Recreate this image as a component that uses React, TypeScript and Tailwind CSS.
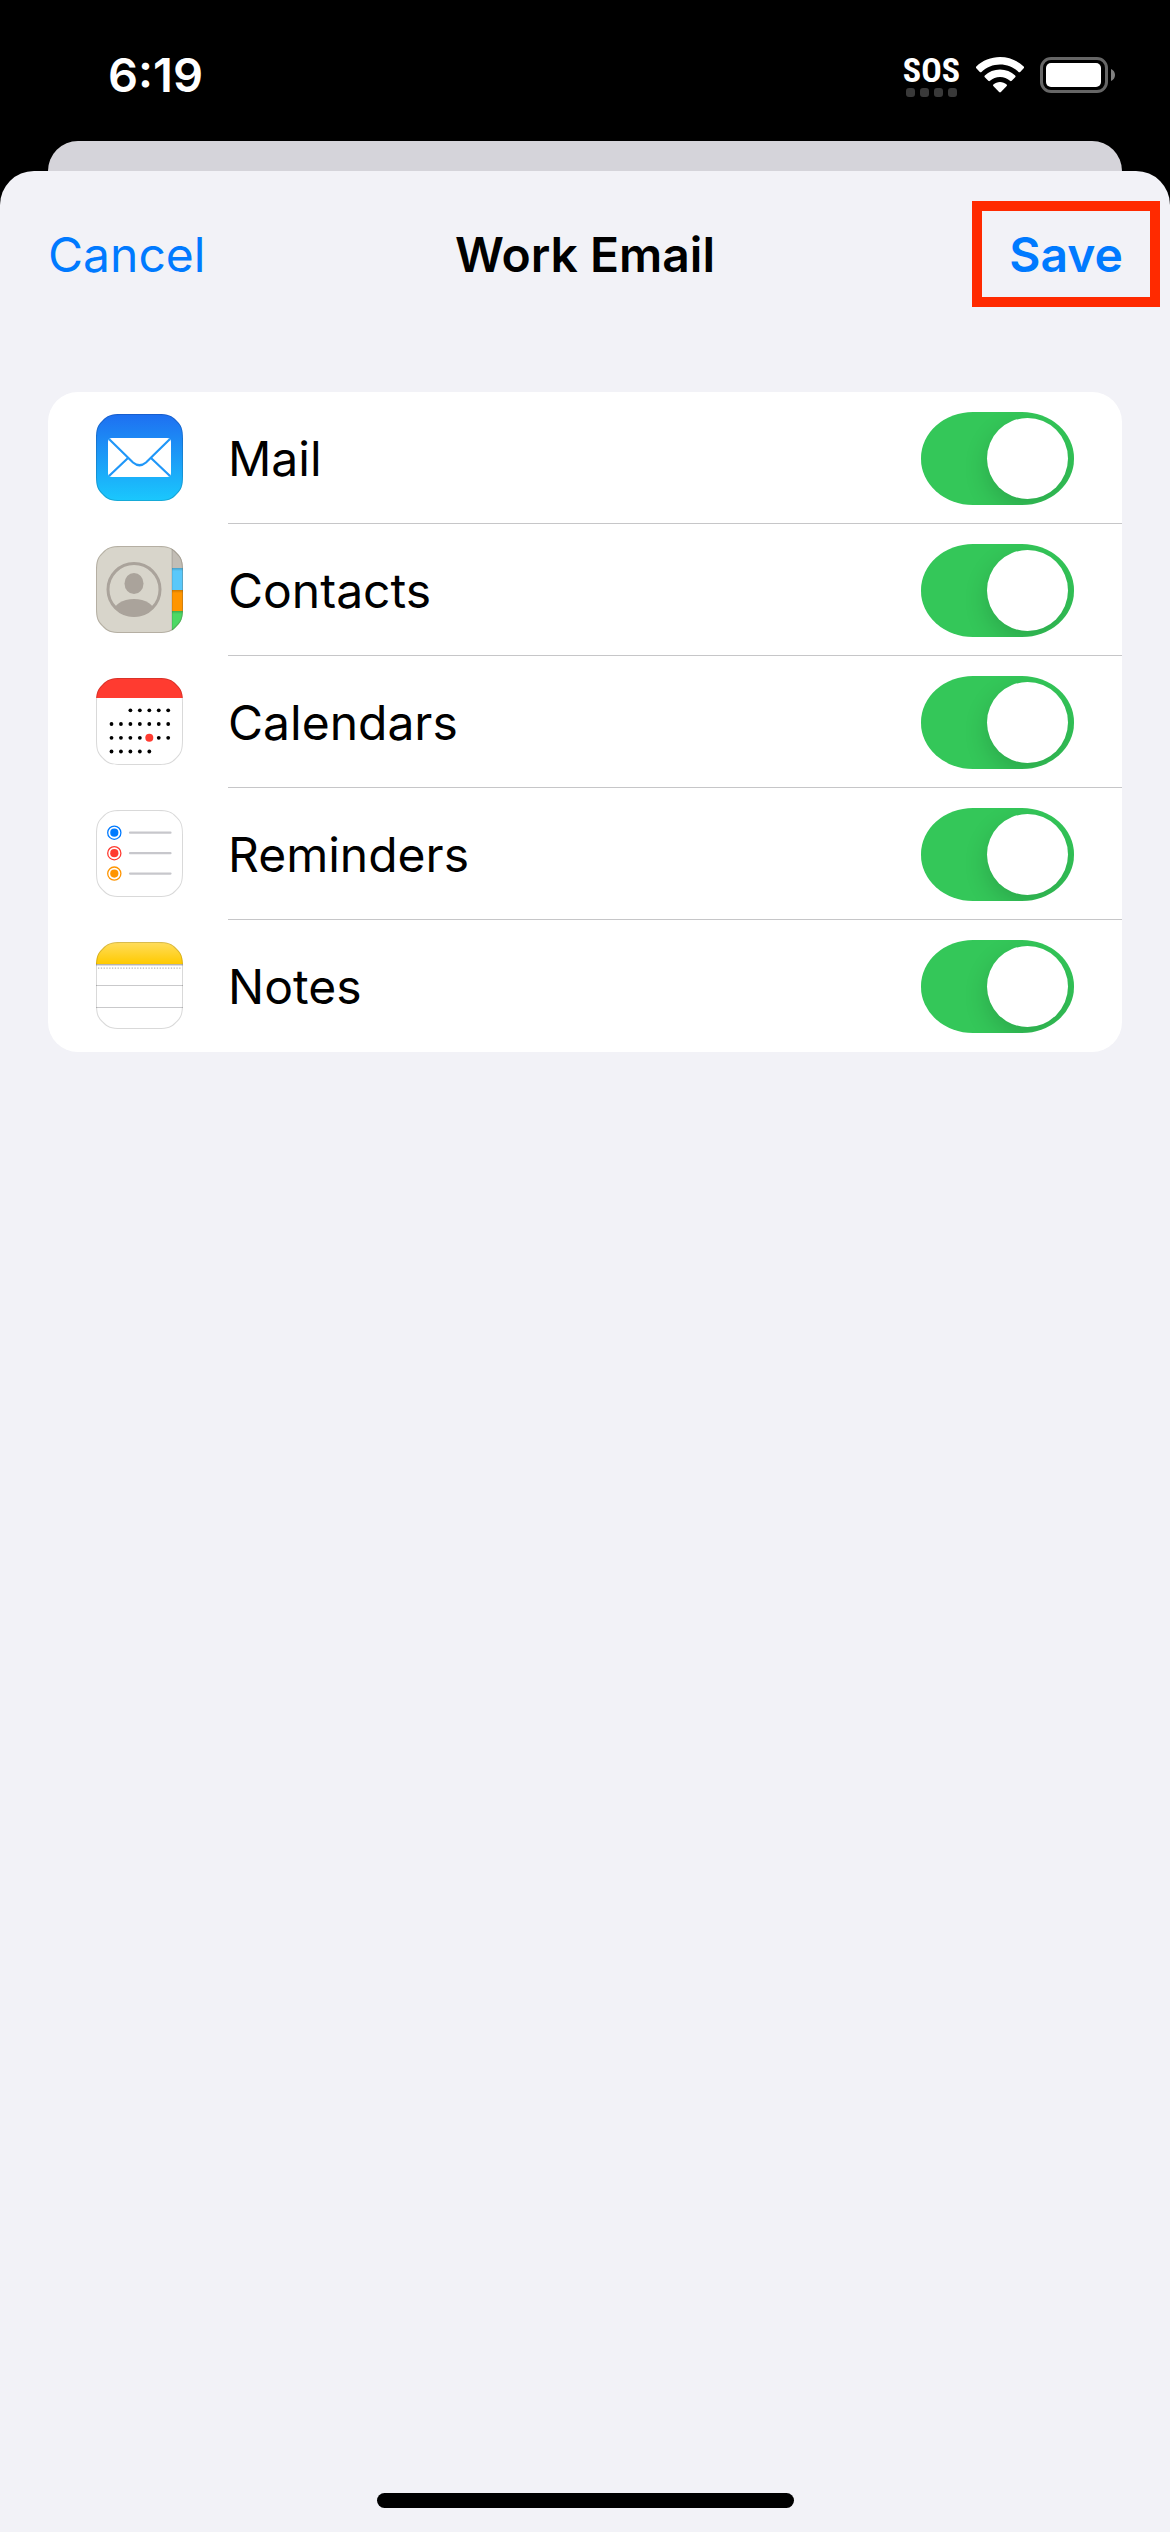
import React, { useState } from 'react';

interface Account {
  id: string;
  label: string;
  icon: React.ReactNode;
}

const TILE =
  'M25 0H62C72 0 76 1.500 80.500 6.500C85.500 11 87 15 87 25V62C87 72 85.500 76 80.500 80.500C76 85.500 72 87 62 87H25C15 87 11 85.500 6.500 80.500C1.500 76 0 72 0 62V25C0 15 1.500 11 6.500 6.500C11 1.500 15 0 25 0Z';

// Rounded tile shared by every app icon
const IconTile: React.FC<{ id: string; edge: string; children: React.ReactNode }> = ({ id, edge, children }) => (
  <svg viewBox="0 0 87 87" className="w-[87px] h-[87px] mb-px shrink-0" aria-hidden="true">
    <defs>
      <clipPath id={`${id}-clip`}>
        <path d={TILE} />
      </clipPath>
    </defs>
    <g clipPath={`url(#${id}-clip)`}>
      {children}
      <path d={TILE} fill="none" stroke={edge} strokeWidth="2" />
    </g>
  </svg>
);

const MailIcon = () => (
  <IconTile id="mail" edge="rgba(0,0,0,0.15)">
    <defs>
      <linearGradient id="mail-bg" x1="0" y1="0" x2="0" y2="1">
        <stop offset="0" stopColor="#1e6ff1" />
        <stop offset="1" stopColor="#1ac8fd" />
      </linearGradient>
    </defs>
    <rect width="87" height="87" fill="url(#mail-bg)" />
    <rect x="12" y="24" width="63" height="39" rx="4" fill="#fff" />
    <g fill="none" stroke="#2097f8" strokeWidth="2.200">
      <path d="M13 25L37 48.500Q43.500 54 50 48.500L74 25" />
      <path d="M13 62L32 44M74 62L55 44" />
    </g>
  </IconTile>
);

const ContactsIcon = () => (
  <IconTile id="contacts" edge="rgba(90,80,60,0.28)">
    <defs>
      <clipPath id="contacts-face">
        <circle cx="38" cy="43.500" r="27" />
      </clipPath>
      <linearGradient id="contacts-shade" x1="0" y1="0" x2="0" y2="1">
        <stop offset="0" stopColor="#000" stopOpacity="0.2" />
        <stop offset="1" stopColor="#000" stopOpacity="0" />
      </linearGradient>
    </defs>
    <rect width="87" height="87" fill="#d8d5cb" />
    <rect x="76" width="11" height="22" fill="#c2bdb5" />
    <rect x="76" y="22" width="11" height="22" fill="#5ac8fa" />
    <rect x="76" y="44" width="11" height="21" fill="#ff9500" />
    <rect x="76" y="65" width="11" height="22" fill="#4cd964" />
    <rect x="76" y="22" width="11" height="3" fill="url(#contacts-shade)" />
    <rect x="76" y="44" width="11" height="3" fill="url(#contacts-shade)" />
    <rect x="76" y="65" width="11" height="3" fill="url(#contacts-shade)" />
    <rect x="75.500" width="1" height="87" fill="#000" opacity="0.15" />
    <circle cx="38" cy="43.500" r="26" fill="none" stroke="#aaa39b" strokeWidth="3" />
    <ellipse cx="38" cy="37.500" rx="9.500" ry="10.500" fill="#aaa39b" />
    <ellipse cx="38" cy="67" rx="21" ry="14" fill="#aaa39b" clipPath="url(#contacts-face)" />
  </IconTile>
);

const CALENDAR_ROWS = [
  { y: 32.3, from: 2, to: 6 },
  { y: 46, from: 0, to: 6 },
  { y: 59.8, from: 0, to: 6 },
  { y: 73.5, from: 0, to: 4 },
];

const CalendarIcon = () => (
  <IconTile id="calendar" edge="rgba(0,0,0,0.15)">
    <rect width="87" height="87" fill="#fff" />
    <rect width="87" height="20" fill="#ff3b30" />
    {CALENDAR_ROWS.map((row, r) =>
      [0, 1, 2, 3, 4, 5, 6]
        .filter((col) => col >= row.from && col <= row.to)
        .map((col) => {
          const today = r === 2 && col === 4;
          return (
            <circle
              key={`${r}-${col}`}
              cx={15.5 + col * 9.45}
              cy={row.y}
              r={today ? 4 : 1.9}
              fill={today ? '#ff3b30' : '#000'}
            />
          );
        })
    )}
  </IconTile>
);

const RemindersIcon = () => (
  <IconTile id="reminders" edge="rgba(0,0,0,0.15)">
    <rect width="87" height="87" fill="#fff" />
    {[
      { y: 22.7, color: '#007aff' },
      { y: 43.2, color: '#ff3b30' },
      { y: 63.6, color: '#ff9500' },
    ].map(({ y, color }) => (
      <g key={color}>
        <circle cx="18.300" cy={y} r="6.600" fill="none" stroke={color} strokeWidth="1.300" />
        <circle cx="18.300" cy={y} r="4.100" fill={color} />
        <path d={`M34 ${y}H74.500`} stroke="#c7c7cc" strokeWidth="2.200" strokeLinecap="round" />
      </g>
    ))}
  </IconTile>
);

const NotesIcon = () => (
  <IconTile id="notes" edge="rgba(0,0,0,0.15)">
    <defs>
      <linearGradient id="notes-bar" x1="0" y1="0" x2="0" y2="1">
        <stop offset="0" stopColor="#ffdd5e" />
        <stop offset="1" stopColor="#ffca00" />
      </linearGradient>
    </defs>
    <rect width="87" height="87" fill="#fff" />
    <rect width="87" height="22" fill="url(#notes-bar)" />
    <rect y="22" width="87" height="1" fill="#b5b3ad" />
    <rect y="23" width="87" height="1" fill="#dcdce0" />
    <path d="M2 26.200H86" stroke="#b8b8b8" strokeWidth="1.200" strokeDasharray="1.300 1.500" />
    <path d="M0 43.500H87M0 65.500H87" stroke="#c9c9cb" />
  </IconTile>
);

const accounts: Account[] = [
  { id: 'mail', label: 'Mail', icon: <MailIcon /> },
  { id: 'contacts', label: 'Contacts', icon: <ContactsIcon /> },
  { id: 'calendars', label: 'Calendars', icon: <CalendarIcon /> },
  { id: 'reminders', label: 'Reminders', icon: <RemindersIcon /> },
  { id: 'notes', label: 'Notes', icon: <NotesIcon /> },
];

const StatusBar = () => (
  <div className="h-[141px] pt-2 pl-[108px] pr-[55px] flex items-center justify-between text-white">
    <span className="text-[47px] leading-[56px] font-semibold">6:19</span>
    <div className="flex items-center gap-4">
      <div className="flex flex-col items-center gap-1 pt-1">
        <span className="text-[34px] leading-[28px] font-bold font-['Roboto_Condensed','Open_Sans_Condensed','Liberation_Sans_Narrow','Roboto',sans-serif]">SOS</span>
        <div className="flex gap-[5px]">
          {[0, 1, 2, 3].map((dot) => (
            <span key={dot} className="w-[9px] h-[9px] rounded-[3px] bg-[#393939]" />
          ))}
        </div>
      </div>
      <svg viewBox="0 0 48 36" className="w-12 h-9" fill="#fff" aria-label="Wi-Fi">
        <path d="M24 0C33 0 41.500 3.500 47.700 9.500Q48.500 10.400 47.700 11.300L44.200 14.900Q43.400 15.700 42.500 14.900C37.500 10.200 31 7.500 24 7.500S10.500 10.200 5.500 14.900Q4.600 15.700 3.800 14.900L0.300 11.300Q-0.500 10.400 0.300 9.500C6.500 3.500 15 0 24 0Z" />
        <path d="M24 12.500C29.800 12.500 35.200 14.700 39.200 18.400Q40.100 19.300 39.200 20.200L35.700 23.800Q34.900 24.600 34 23.800C31.300 21.400 27.800 20 24 20S16.700 21.400 14 23.800Q13.100 24.600 12.300 23.800L8.800 20.200Q7.900 19.300 8.800 18.400C12.800 14.700 18.200 12.500 24 12.500Z" />
        <path d="M24 25C26.500 25 28.800 25.900 30.600 27.400Q31.500 28.200 30.700 29.100L24.900 35.100Q24 36 23.100 35.100L17.300 29.100Q16.500 28.200 17.400 27.400C19.200 25.900 21.500 25 24 25Z" />
      </svg>
      <svg viewBox="0 0 75 36" className="w-[75px] h-9" aria-label="Battery">
        <rect x="1.500" y="1.500" width="65" height="33" rx="9.500" fill="none" stroke="#666" strokeWidth="3" />
        <rect x="6" y="6" width="55" height="24" rx="5" fill="#fff" />
        <path d="M71 12C73.400 13 75 15.300 75 18S73.400 23 71 24Z" fill="#808080" />
      </svg>
    </div>
  </div>
);

const App: React.FC = () => {
  const [enabled, setEnabled] = useState<Record<string, boolean>>({
    mail: true,
    contacts: true,
    calendars: true,
    reminders: true,
    notes: true,
  });

  const toggle = (id: string) => setEnabled((prev) => ({ ...prev, [id]: !prev[id] }));

  return (
    <div className="min-h-screen flex flex-col bg-black text-black text-[48px] leading-[60px] font-['Inter',sans-serif]">
      <StatusBar />

      {/* Edge of the screen behind the sheet */}
      <div className="h-[30px] mx-12 rounded-t-[30px] bg-[#d5d4da]" />

      <div className="flex-1 flex flex-col rounded-t-[34px] bg-[#f2f2f7]">
        <header className="grid grid-cols-[1fr_auto_1fr] items-center pt-[30px] px-2.5">
          <button className="justify-self-start pt-0.5 pl-[38px] text-[#007aff]">Cancel</button>
          <h1 className="pt-0.5 font-semibold">Work Email</h1>
          <button className="justify-self-end h-[106px] pt-0.5 px-[27px] border-[10px] border-[#ff2a00] text-[#007aff] font-semibold">
            Save
          </button>
        </header>

        <main className="flex-1 px-12 pt-[85px]">
          <ul className="rounded-[30px] bg-white">
            {accounts.map((account, idx) => (
              <li key={account.id} className="flex items-center h-[132px] pl-12">
                {account.icon}
                <label
                  htmlFor={account.id}
                  className={`flex-1 h-full ml-[45px] pt-0.5 flex items-center border-b ${
                    idx < accounts.length - 1 ? 'border-[#c6c6c8]' : 'border-transparent'
                  }`}
                >
                  <span className="flex-1">{account.label}</span>
                  <input
                    id={account.id}
                    type="checkbox"
                    role="switch"
                    checked={enabled[account.id]}
                    onChange={() => toggle(account.id)}
                    className="appearance-none mr-12 w-[153px] h-[93px] p-1.5 flex items-center overflow-hidden rounded-[52px/46px] bg-[#e9e9ea] checked:bg-[#34c759] checked:justify-end before:content-[''] before:w-[81px] before:h-[81px] before:rounded-full before:bg-white before:shadow-[0_9px_24px_rgba(0,0,0,0.16)]"
                  />
                </label>
              </li>
            ))}
          </ul>
        </main>

        <div className="w-[417px] h-[15px] mb-6 mx-auto rounded-full bg-black" />
      </div>
    </div>
  );
};

export default App;
